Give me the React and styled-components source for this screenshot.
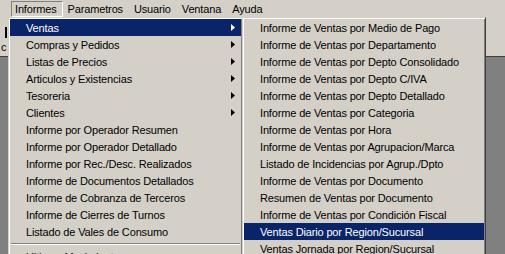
import React from 'react';
import styled, { createGlobalStyle } from 'styled-components';

// -------------------------------------------------------------------------------------------------
// Menú clásico estilo Windows 2000: Informes > Ventas

const GlobalStyle = createGlobalStyle`
    html, body {
        margin: 0;
        padding: 0;
        background: #808080;
    }
    body {
        font-family: 'Liberation Sans', Arial, sans-serif;
        font-size: 11px;
        letter-spacing: -0.15px;
        -webkit-font-smoothing: none;
    }
`;

const menuBar = ['Informes', 'Parametros', 'Usuario', 'Ventana', 'Ayuda'];

const informes = [
    { label: 'Ventas', sub: true, active: true },
    { label: 'Compras y Pedidos', sub: true },
    { label: 'Listas de Precios', sub: true },
    { label: 'Articulos y Existencias', sub: true },
    { label: 'Tesoreria', sub: true },
    { label: 'Clientes', sub: true },
    { label: 'Informe por Operador Resumen' },
    { label: 'Informe por Operador Detallado' },
    { label: 'Informe por Rec./Desc. Realizados' },
    { label: 'Informe de Documentos Detallados' },
    { label: 'Informe de Cobranza de Terceros' },
    { label: 'Informe de Cierres de Turnos' },
    { label: 'Listado de Vales de Consumo' },
    { separator: true },
    { label: 'Ultimos Movimientos' },
];

const ventas = [
    'Informe de Ventas por Medio de Pago',
    'Informe de Ventas por Departamento',
    'Informe de Ventas por Depto Consolidado',
    'Informe de Ventas por Depto C/IVA',
    'Informe de Ventas por Depto Detallado',
    'Informe de Ventas por Categoria',
    'Informe de Ventas por Hora',
    'Informe de Ventas por Agrupacion/Marca',
    'Listado de Incidencias por Agrup./Dpto',
    'Informe de Ventas por Documento',
    'Resumen de Ventas por Documento',
    'Informe de Ventas por Condición Fiscal',
    'Ventas Diario por Region/Sucursal',
    'Ventas Jornada por Region/Sucursal',
];

const Arrow = ({ active }) => (
    <svg width="4" height="7" viewBox="0 0 4 7">
        <path d="M0 0 L4 3.5 L0 7 Z" fill={active ? '#fff' : '#000'} />
    </svg>
);

const App = () => {
    return (
        <Window>
            <GlobalStyle />
            <MenuBar>
                {menuBar.map((item, index) => (
                    <BarItem key={item} pressed={index === 0}>
                        {item}
                    </BarItem>
                ))}
            </MenuBar>
            <Toolbar>
                <ToolMark />
                <ToolGlyph>c</ToolGlyph>
            </Toolbar>
            <Workspace />

            <Dropdown style={{ left: 8, top: 17, width: 235 }}>
                {informes.map((item, index) =>
                    item.separator ? (
                        <Separator key={index} />
                    ) : (
                        <Item key={index} active={item.active}>
                            <span>{item.label}</span>
                            {item.sub ? <Arrow active={item.active} /> : null}
                        </Item>
                    )
                )}
            </Dropdown>

            <Dropdown style={{ left: 242, top: 17, width: 244 }}>
                {ventas.map((item, index) => (
                    <Item key={item} active={index === 12}>
                        <span>{item}</span>
                    </Item>
                ))}
            </Dropdown>
        </Window>
    );
};

const Window = styled.div`
    position: relative;
    width: 505px;
    height: 254px;
    overflow: hidden;
    display: flex;
    flex-direction: column;
    background: #808080;
`;
const MenuBar = styled.div`
    height: 17px;
    display: flex;
    align-items: stretch;
    padding: 0 0 0 11px;
    background: #d4d0c8;
    color: #000;
`;
const BarItem = styled.div`
    display: flex;
    align-items: center;
    padding: 0 5px 0 3px;
    margin-right: 1px;
    box-sizing: border-box;
    border: 1px solid transparent;
    ${(p) =>
        p.pressed &&
        `
        border-color: #808080 #ffffff #ffffff #808080;
        margin-top: 1px;
        height: 16px;
    `}
`;
const Toolbar = styled.div`
    height: 39px;
    position: relative;
    background: #d4d0c8;
    border-bottom: 1px solid #404040;
`;
const ToolMark = styled.div`
    position: absolute;
    left: 5px;
    top: 10px;
    width: 2px;
    height: 11px;
    background: #000;
`;
const ToolGlyph = styled.div`
    position: absolute;
    left: 1px;
    top: 24px;
    font-size: 11px;
`;
const Workspace = styled.div`
    flex: 1;
    background: #808080;
`;
const Dropdown = styled.div`
    position: absolute;
    display: flex;
    flex-direction: column;
    box-sizing: border-box;
    background: #d4d0c8;
    border: 1px solid;
    border-color: #d4d0c8 #404040 #404040 #d4d0c8;
    box-shadow: inset 1px 1px 0 #ffffff, inset -1px -1px 0 #808080;
    padding: 1px;
`;
const Item = styled.div`
    height: 17px;
    display: flex;
    align-items: center;
    justify-content: space-between;
    padding: 0 6px 0 16px;
    white-space: nowrap;
    color: ${(p) => (p.active ? '#ffffff' : '#000000')};
    background: ${(p) => (p.active ? '#0a246a' : 'transparent')};
`;
const Separator = styled.div`
    height: 8px;
    margin: 0 1px;
    display: flex;
    flex-direction: column;
    justify-content: center;

    &::before {
        content: '';
        height: 1px;
        background: #808080;
    }
    &::after {
        content: '';
        height: 1px;
        background: #ffffff;
    }
`;

export default App;
